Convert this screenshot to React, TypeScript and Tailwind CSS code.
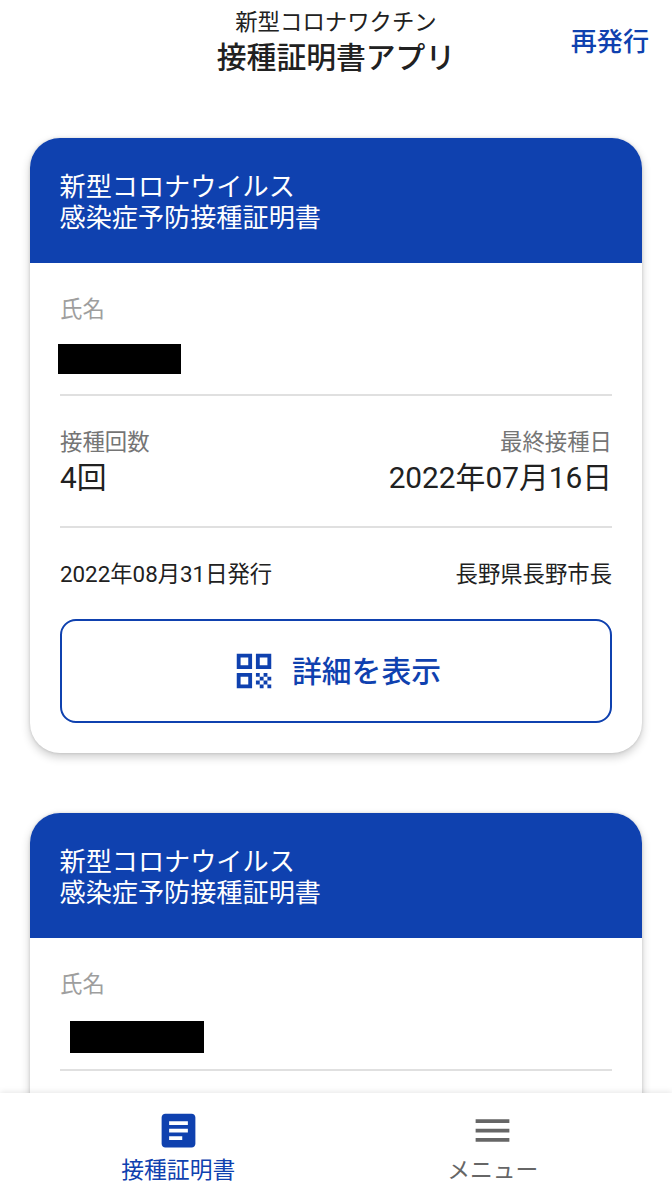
import { MdArticle, MdMenu, MdQrCode } from 'react-icons/md'

type Certificate = {
  id: number
  redaction: string
  details?: {
    doses: string
    lastDose: string
    issuedOn: string
    issuer: string
  }
}

const certificates: Certificate[] = [
  {
    id: 1,
    redaction: 'mt-[19px] -ml-[2px] h-[30px] w-[123px] mb-[20px]',
    details: {
      doses: '4回',
      lastDose: '2022年07月16日',
      issuedOn: '2022年08月31日発行',
      issuer: '長野県長野市長',
    },
  },
  {
    id: 2,
    redaction: 'mt-[21px] ml-[10px] h-[32px] w-[134px] mb-[16px]',
  },
]

const tabs = [
  { label: '接種証明書', icon: MdArticle, color: 'text-[#0f41af]' },
  { label: 'メニュー', icon: MdMenu, color: 'text-[#666666]' },
]

function CertificateCard({ certificate }: { certificate: Certificate }) {
  const { details, redaction } = certificate

  return (
    <article className="min-h-[615px] shrink-0 overflow-hidden rounded-[30px] bg-white shadow-[0_4px_10px_rgba(0,0,0,0.2),0_0_3px_rgba(0,0,0,0.14)]">
      <h2 className="h-[125px] bg-[#0f41af] px-[29.5px] pt-[34px] text-[26.15px] leading-[31px] text-white">
        新型コロナウイルス
        <br />
        感染症予防接種証明書
      </h2>

      <div className="px-[30px] pb-[30px]">
        <section className="border-b-2 border-[#e0e0e0] pt-[30px]">
          <p className="text-[22.4px] leading-8 text-[#9e9e9e]">氏名</p>
          <div className={`bg-black ${redaction}`} />
        </section>

        {details && (
          <>
            <section className="flex h-[132px] justify-between border-b-2 border-[#e0e0e0] pt-[30px]">
              <div>
                <p className="text-[22.4px] leading-8 text-[#757575]">接種回数</p>
                <p className="text-[29.8px] leading-10 text-[#212121]">{details.doses}</p>
              </div>
              <div className="text-right">
                <p className="text-[22.4px] leading-8 text-[#757575]">最終接種日</p>
                <p className="text-[29.8px] leading-10 text-[#212121]">{details.lastDose}</p>
              </div>
            </section>

            <div className="flex justify-between pt-[30px] text-[22.35px] leading-8 text-[#212121]">
              <span>{details.issuedOn}</span>
              <span>{details.issuer}</span>
            </div>

            <button className="mt-[29px] flex h-[104px] w-full items-center justify-center gap-[15px] rounded-2xl border-2 border-[#0f41af] text-[29.8px] font-medium text-[#0f41af]">
              <MdQrCode className="size-[46px]" />
              <span className="pt-[2px]">詳細を表示</span>
            </button>
          </>
        )}
      </div>
    </article>
  )
}

export default function App() {
  return (
    <div className="flex h-[1200px] w-[672px] flex-col overflow-hidden bg-white font-['Roboto','Noto_Sans_CJK_JP',sans-serif]" lang="ja">
      <header className="grid h-[108px] shrink-0 grid-cols-[1fr_auto_1fr] text-[#212121]">
        <h1 className="col-start-2 pt-[6px] text-center">
          <span className="block text-[22.4px] leading-8">新型コロナワクチン</span>
          <span className="block text-[29.8px] font-medium leading-10">接種証明書アプリ</span>
        </h1>
        <button className="mt-[23px] mr-[23px] h-10 justify-self-end text-[26.1px] font-medium text-[#0f41af]">再発行</button>
      </header>

      <main className="flex min-h-0 flex-1 flex-col gap-[60px] overflow-hidden px-[30px] pt-[30px]">
        {certificates.map((certificate) => (
          <CertificateCard key={certificate.id} certificate={certificate} />
        ))}
      </main>

      <nav className="z-10 grid h-[107px] shrink-0 grid-cols-2 bg-white pr-[22px] pl-[21px] shadow-[0_-1px_6px_rgba(0,0,0,0.1)]">
        {tabs.map((tab) => (
          <button key={tab.label} className={`flex flex-col items-center pt-[15px] text-[22.8px] leading-8 ${tab.color}`}>
            <tab.icon className="size-[45px]" />
            <span className="pt-[2px]">{tab.label}</span>
          </button>
        ))}
      </nav>
    </div>
  )
}
